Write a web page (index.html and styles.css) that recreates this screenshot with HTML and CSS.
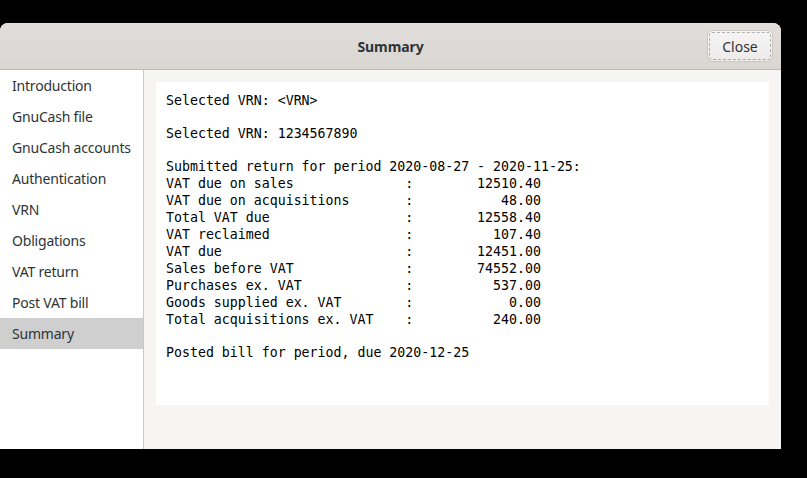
FILE: index.html
```html
<!DOCTYPE html>
<html>
<head>
<meta charset="utf-8">
<link rel="stylesheet" href="styles.css">
</head>
<body>
<div class="window">
  <header class="titlebar">
    <div class="title">Summary</div>
    <button class="btn">Close</button>
  </header>
  <div class="content">
    <nav class="sidebar">
      <div class="item">Introduction</div>
      <div class="item">GnuCash file</div>
      <div class="item">GnuCash accounts</div>
      <div class="item">Authentication</div>
      <div class="item">VRN</div>
      <div class="item">Obligations</div>
      <div class="item">VAT return</div>
      <div class="item">Post VAT bill</div>
      <div class="item selected">Summary</div>
    </nav>
    <main class="main">
      <div class="textbox">
<pre class="para">Selected VRN: &lt;VRN&gt;</pre>
<pre class="para">Selected VRN: 1234567890</pre>
<pre class="para">Submitted return for period 2020-08-27 - 2020-11-25:
VAT due on sales              :        12510.40
VAT due on acquisitions       :           48.00
Total VAT due                 :        12558.40
VAT reclaimed                 :          107.40
VAT due                       :        12451.00
Sales before VAT              :        74552.00
Purchases ex. VAT             :          537.00
Goods supplied ex. VAT        :            0.00
Total acquisitions ex. VAT    :          240.00</pre>
<pre class="para">Posted bill for period, due 2020-12-25</pre>
      </div>
    </main>
  </div>
</div>
</body>
</html>
```

FILE: styles.css
```css
html, body {
  margin: 0;
  padding: 0;
  background: #000;
  width: 807px;
  height: 478px;
  overflow: hidden;
}
.window {
  margin-top: 23px;
  width: 781px;
  height: 426px;
  display: flex;
  flex-direction: column;
  border-radius: 8px 8px 0 0;
  overflow: hidden;
  background: #f6f5f4;
  font-family: "Noto Sans", "Open Sans", sans-serif;
  color: #2e3436;
}
.titlebar {
  height: 47px;
  flex: none;
  box-sizing: border-box;
  border-bottom: 1px solid #bfb8b1;
  background: linear-gradient(to top, #dad6d2, #e1dedb);
  position: relative;
  display: flex;
  align-items: center;
  justify-content: flex-end;
  padding-right: 8px;
}
.title {
  position: absolute;
  left: 0;
  right: 0;
  top: 0;
  bottom: 0;
  display: flex;
  align-items: center;
  justify-content: center;
  font-weight: bold;
  font-size: 14px;
  color: #2e3436;
  letter-spacing: -0.1px;
}
.btn {
  position: relative;
  width: 66px;
  height: 32px;
  box-sizing: border-box;
  border: 1px solid #cdc7c2;
  border-radius: 5px;
  background: linear-gradient(to top, #edebe9, #f6f5f4);
  font-family: "Noto Sans", "Open Sans", sans-serif;
  font-size: 14px;
  color: #2e3436;
  outline: 1px dashed rgba(46, 52, 54, 0.35);
  outline-offset: -3px;
  padding: 0;
  margin-top: 0;
}
.content {
  flex: 1;
  display: flex;
  min-height: 0;
}
.sidebar {
  width: 143px;
  flex: none;
  background: #fff;
  border-right: 1px solid #cdc7c2;
}
.item {
  height: 31px;
  line-height: 31px;
  padding-left: 12px;
  font-size: 14px;
  color: #2e3436;
  letter-spacing: -0.2px;
}
.item.selected {
  background: #cfcfcf;
}
.main {
  flex: 1;
  padding: 12px;
}
.textbox {
  background: #fff;
  height: 323px;
  box-sizing: border-box;
  padding: 10px 10px;
}
.para {
  margin: 0 0 16px 0;
  font-family: "DejaVu Sans Mono", monospace;
  font-size: 13.25px;
  line-height: 17px;
  color: #000;
}
```
